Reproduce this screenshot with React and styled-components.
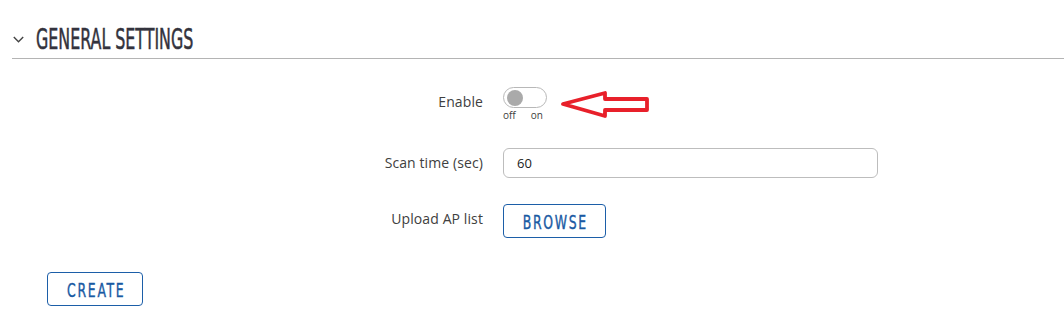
import React from "react";
import styled, { createGlobalStyle } from "styled-components";

const Global = createGlobalStyle`
  html, body { margin: 0; padding: 0; background: #fff; }
  body { font-family: "Open Sans", "Liberation Sans", sans-serif; }
`;

const Page = styled.div`
  width: 1064px;
  height: 324px;
  overflow: hidden;
  background: #fff;
`;

const Section = styled.section`
  padding: 20px 0 0 12px;
`;

const Header = styled.div`
  display: flex;
  align-items: center;
  gap: 12px;
  height: 38px;
  border-bottom: 1px solid #b4b4b4;
  padding-left: 1px;
`;

const Title = styled.h2`
  margin: 0;
  font-family: "DejaVu Sans Condensed", "Liberation Sans", sans-serif;
  font-stretch: condensed;
  font-weight: 400;
  font-size: 28px;
  color: #33333d;
  -webkit-text-stroke: 0.5px #33333d;
  display: inline-block;
  white-space: nowrap;
  transform-origin: left center;
  transform: scaleX(0.63);
`;

const Form = styled.div`
  display: grid;
  grid-template-columns: 471px 375px;
  column-gap: 20px;
  row-gap: 26px;
  padding-top: 28px;
`;

const Label = styled.div`
  text-align: right;
  font-size: 14px;
  line-height: 30px;
  color: #404040;
  letter-spacing: 0.1px;
`;

const ToggleWrap = styled.div`
  display: flex;
  align-items: center;
  gap: 14px;
`;

const ToggleCol = styled.div`
  display: flex;
  flex-direction: column;
  width: 44px;
`;

const Track = styled.div`
  width: 44px;
  height: 21px;
  box-sizing: border-box;
  border: 1px solid #b8b8b8;
  border-radius: 11px;
  background: #fff;
  display: flex;
  align-items: center;
  padding-left: 3px;
`;

const Knob = styled.div`
  width: 16px;
  height: 16px;
  border-radius: 50%;
  background: #aaaaaa;
`;

const OnOff = styled.div`
  display: flex;
  justify-content: space-between;
  padding: 0 4px 0 0;
  font-size: 10px;
  line-height: 14px;
  color: #404040;
`;

const Input = styled.input`
  box-sizing: border-box;
  width: 375px;
  height: 30px;
  border: 1px solid #bdbdbd;
  border-radius: 6px;
  padding: 0 13px;
  font-family: "Open Sans", "Liberation Sans", sans-serif;
  font-size: 13px;
  color: #222;
  outline: none;
`;

const Button = styled.button`
  box-sizing: border-box;
  width: ${(p) => p.$w}px;
  height: 34px;
  border: 1px solid #1c5ea8;
  border-radius: 4px;
  background: #fff;
  padding: 2px 0 0;
  cursor: pointer;
  display: flex;
  align-items: center;
  justify-content: center;
`;

const ButtonText = styled.span`
  display: inline-block;
  color: #1a5aa3;
  -webkit-text-stroke: 0.4px #1a5aa3;
  font-family: "DejaVu Sans Condensed", "Liberation Sans", sans-serif;
  font-stretch: condensed;
  font-weight: 400;
  font-size: 20px;
  line-height: 1;
  letter-spacing: 2.5px;
  white-space: nowrap;
  transform: scaleX(0.69);
  margin-right: -2px;
`;

const Footer = styled.div`
  padding: 34px 0 0 47px;
`;

const Arrow = () => (
  <svg width="92" height="28" viewBox="0 0 92 28">
    <polygon
      points="2,13 44,2 44,8 86,8 86,19 44,19 44,25"
      fill="#fff"
      stroke="#e8202a"
      strokeWidth="3.8"
      strokeLinejoin="round"
    />
  </svg>
);

const Chevron = () => (
  <svg width="11" height="7" viewBox="0 0 11 7">
    <polyline points="0.8,1 5.5,5.8 10.2,1" fill="none" stroke="#444" strokeWidth="1.4" />
  </svg>
);

export default function App() {
  return (
    <Page>
      <Global />
      <Section>
        <Header>
          <Chevron />
          <Title>GENERAL SETTINGS</Title>
        </Header>
        <Form>
          <Label>Enable</Label>
          <ToggleWrap>
            <ToggleCol>
              <Track>
                <Knob />
              </Track>
              <OnOff>
                <span>off</span>
                <span>on</span>
              </OnOff>
            </ToggleCol>
            <Arrow />
          </ToggleWrap>
          <Label>Scan time (sec)</Label>
          <div>
            <Input defaultValue="60" />
          </div>
          <Label>Upload AP list</Label>
          <div>
            <Button $w={103}>
              <ButtonText>BROWSE</ButtonText>
            </Button>
          </div>
        </Form>
      </Section>
      <Footer>
        <Button $w={96}>
          <ButtonText>CREATE</ButtonText>
        </Button>
      </Footer>
    </Page>
  );
}
